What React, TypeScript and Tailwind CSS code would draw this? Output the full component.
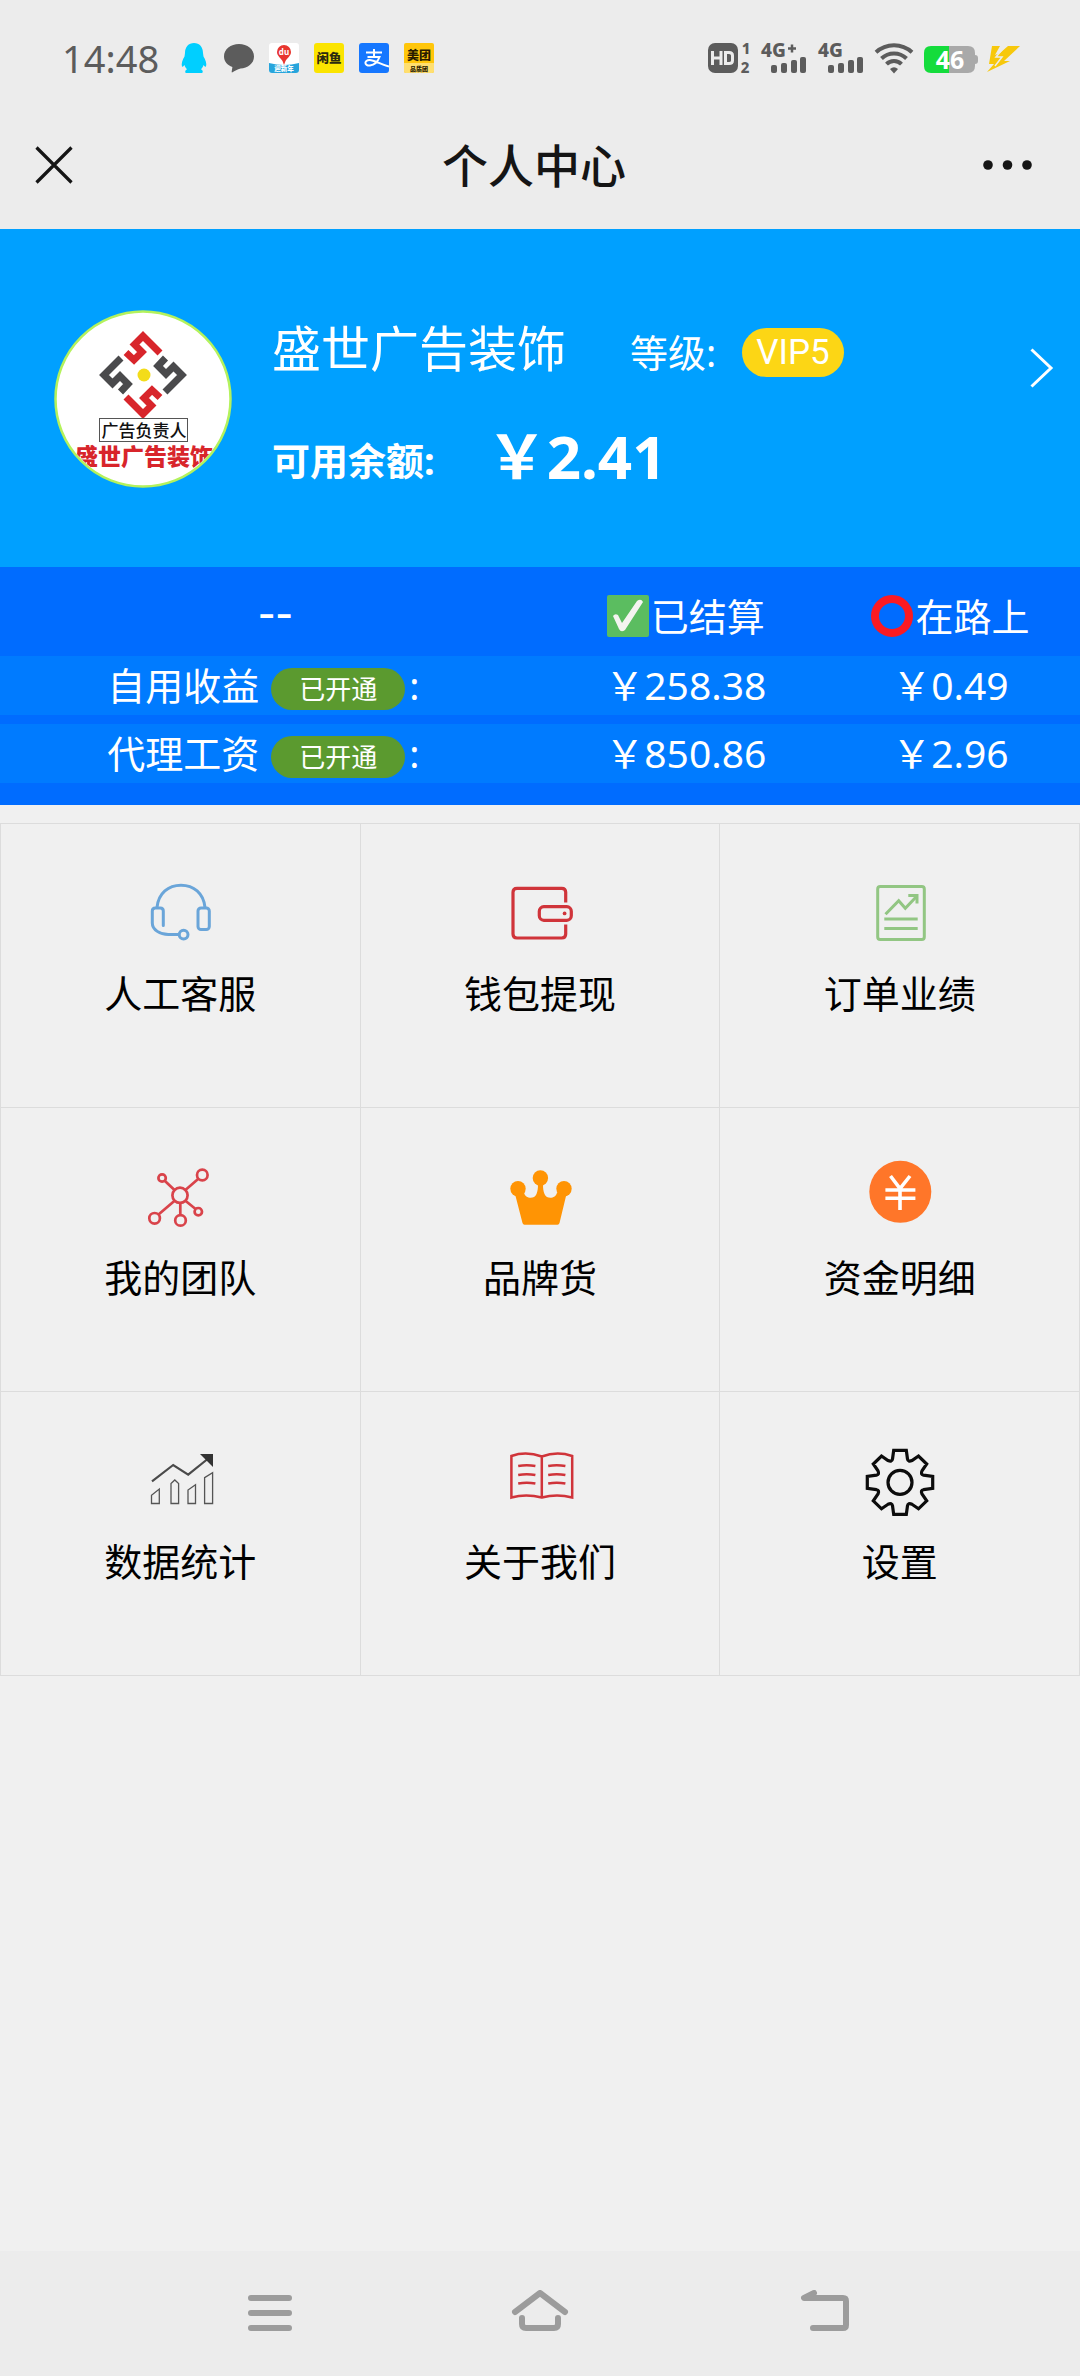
import React from "react"

const StatusBar = () => (
	<div className="flex h-[100px] items-center justify-between pt-4 pr-[60px] pl-[62px] text-[#5c5c5c]">
		<div className="flex items-center">
			<time className="w-[117px] text-[38px] leading-none">14:48</time>
			<div className="flex items-center gap-[15px]">
				<svg className="size-[30px]" viewBox="0 0 30 30" fill="#00cfff">
					<path d="M15 0c5.500 0 9 4 9 10l.5 3.500c2 3.500 3.500 7 2.500 10-.6.8-1.700-.5-2.500-1.500-.4 1.800-1.200 3-2.500 4.200 2 .8 2.500 3.800.5 3.800h-15c-2 0-1.500-3 .5-3.800-1.300-1.200-2.100-2.400-2.500-4.200-.8 1-1.900 2.300-2.500 1.500-1-3 .5-6.500 2.500-10L6 10c0-6 3.500-10 9-10z" />
				</svg>
				<svg className="size-[30px]" viewBox="0 0 30 30" fill="#5c5c5c">
					<path d="M15 1c8.300 0 15 5.200 15 12.500S23.500 25 16.500 25.500c-3 1-6 2.500-8 3.800-.6.3-1-.1-.8-.8l.7-4.500C3.400 22.300 0 18.400 0 13.500 0 6.200 6.700 1 15 1z" />
				</svg>
				<svg className="size-[30px] overflow-visible" viewBox="0 0 30 30">
					<rect width="30" height="30" rx="3" fill="#fff" />
					<path d="M0 20q15 4 30 0v7a3 3 0 0 1-3 3H3a3 3 0 0 1-3-3z" fill="#27a5dc" />
					<path d="M15 2a7 7 0 0 1 7 7c0 4-4 6-5.500 9l-1.500 4-1.500-4C12 15 8 13 8 9a7 7 0 0 1 7-7z" fill="#e8352e" />
					<text x="15" y="12" textAnchor="middle" fontSize="8" fontWeight="700" fill="#fff">
						du
					</text>
					<text x="15" y="28" textAnchor="middle" fontSize="6.500" fontWeight="900" fill="#fff">
						迎新年
					</text>
				</svg>
				<svg className="size-[30px]" viewBox="0 0 30 30">
					<rect width="30" height="30" rx="3" fill="#fbe400" />
					<text x="15" y="20" textAnchor="middle" fontSize="12.500" fontWeight="900" fill="#2b2a10">
						闲鱼
					</text>
				</svg>
				<svg className="size-[30px]" viewBox="0 0 30 30">
					<rect width="30" height="30" rx="3" fill="#1677ff" />
					<path
						d="M7 9.500h16M15 6v8M8.500 14h12c-1.500 4-5 8-9.500 8.500-6 .5-6-5.500-.5-5.500 5 0 10 4 19.500 6.500"
						fill="none"
						stroke="#fff"
						strokeWidth="2"
					/>
				</svg>
				<svg className="size-[30px] overflow-visible" viewBox="0 0 30 30">
					<rect width="30" height="30" rx="2" fill="#ffc60a" />
					<path d="M0 20h30v8a2 2 0 0 1-2 2H2a2 2 0 0 1-2-2z" fill="#ffdf70" />
					<text x="15" y="17" textAnchor="middle" fontSize="12" fontWeight="900" fill="#2a1c00">
						美团
					</text>
					<text x="15" y="28" textAnchor="middle" fontSize="6" fontWeight="900" fill="#2a1c00">
						品质团
					</text>
				</svg>
			</div>
		</div>
		<svg className="h-[30px] w-[312px] overflow-visible" viewBox="0 0 312 30" fill="#5c5c5c" fontWeight="800">
			<rect width="30" height="30" rx="7" />
			<path d="M4.500 8v14M13 8v14M4.500 15H13M17.500 9.500v11h3.500q3.500 0 3.500-3v-5q0-3-3.500-3z" fill="none" stroke="#ececec" strokeWidth="3" />
			<text x="38" y="11" textAnchor="middle" fontSize="15">
				1
			</text>
			<text x="37" y="30" textAnchor="middle" fontSize="15">
				2
			</text>
			<text x="53" y="14" fontSize="19">
				4G
			</text>
			<path d="M84 1.500v8M80 5.500h8" stroke="#5c5c5c" strokeWidth="2.500" />
			<SignalBars x={63} />
			<text x="110" y="14" fontSize="19">
				4G
			</text>
			<SignalBars x={120} />
			<g fill="none" stroke="#5c5c5c" strokeWidth="4">
				<path d="M168 9.200a26.500 26.500 0 0 1 36 0" />
				<path d="M173.500 15.500a18 18 0 0 1 25 0" />
				<path d="M178.500 21.200a10.500 10.500 0 0 1 15 0" />
			</g>
			<path d="M182 26q4-3.600 8 0l-4 4.500z" />
			<path d="M223 3h13v27h-13q-7 0-7-7V10q0-7 7-7z" fill="#14dc3c" />
			<path d="M240 3h20q7 0 7 7v2q3 0 3 3v3q0 3-3 3v2q0 7-7 7h-20z" fill="#a9a9a9" />
			<path d="M235 3h6v27h-6z" fill="#14dc3c" />
			<text x="242" y="25.500" textAnchor="middle" fontSize="25" fontWeight="700" fill="#fff">
				46
			</text>
			<path d="M284 3h8l-5 9 5-2 8-7h12l-16 15h6l-23 11 7-8h-5z" fill="#f7c80c" />
			<path d="M297 3l-9 11h6l-7 9" fill="none" stroke="#ececec" strokeWidth="1.500" />
		</svg>
	</div>
)

const SignalBars = ({ x }: { x: number }) => (
	<>
		<rect x={x} y="22" width="6" height="8" rx="2" />
		<rect x={x + 10} y="20" width="6" height="10" rx="2" />
		<rect x={x + 20} y="17" width="6" height="13" rx="2" />
		<rect x={x + 29} y="14" width="6" height="16" rx="2" />
	</>
)

const TitleBar = () => (
	<header className="flex h-[129px] items-center justify-between px-[34px] text-[#151515]">
		<button type="button" aria-label="关闭">
			<svg className="size-10" viewBox="0 0 40 40" fill="none" stroke="currentColor" strokeWidth="3.200">
				<path d="M2.500 2.500l35 35M37.500 2.500l-35 35" />
			</svg>
		</button>
		<h1 className="pl-3 text-[46px] leading-none font-medium">个人中心</h1>
		<button type="button" aria-label="更多" className="pr-3">
			<svg className="h-10 w-[52px]" viewBox="0 0 52 40" fill="currentColor">
				<circle cx="6" cy="20" r="4.800" />
				<circle cx="25.500" cy="20" r="4.800" />
				<circle cx="45" cy="20" r="4.800" />
			</svg>
		</button>
	</header>
)

const LOGO_PIECE = "M93 44L76 27 67.500 35.500 75 43 67 51 59 43.500"

const Avatar = () => (
	<svg className="size-[178px] shrink-0" viewBox="0 0 178 178">
		<defs>
			<clipPath id="avatar-clip">
				<circle cx="89" cy="89" r="86" />
			</clipPath>
		</defs>
		<circle cx="89" cy="89" r="87.500" fill="#fff" stroke="#b4f25c" strokeWidth="2.500" />
		<g fill="none" strokeWidth="7" transform="translate(13 -1)">
			<path d={LOGO_PIECE} stroke="#d8252b" />
			<path d={LOGO_PIECE} stroke="#4a4a4c" transform="rotate(90 76 66)" />
			<path d={LOGO_PIECE} stroke="#d8252b" transform="rotate(180 76 66)" />
			<path d={LOGO_PIECE} stroke="#4a4a4c" transform="rotate(270 76 66)" />
		</g>
		<circle cx="90" cy="65" r="6.500" fill="#f3dc1a" />
		<rect x="45.500" y="108.500" width="88" height="23" fill="#fff" stroke="#555" />
		<text x="90" y="126.500" textAnchor="middle" fontSize="17" fontWeight="500" fill="#111">
			广告负责人
		</text>
		<g clipPath="url(#avatar-clip)">
			<text x="90" y="155" textAnchor="middle" fontSize="23" fontWeight="900" fill="#d8252b">
				盛世广告装饰
			</text>
		</g>
	</svg>
)

const ProfileCard = () => (
	<section className="flex h-[338px] items-start bg-[#00a0ff] pt-[81px] pr-[26px] pl-[54px] text-white">
		<Avatar />
		<div className="ml-10 flex grow flex-col gap-10 pt-2">
			<div className="flex h-[60px] items-center">
				<span className="text-[49px] leading-none">盛世广告装饰</span>
				<div className="mt-2 ml-16 flex items-center">
					<span className="text-[38px] leading-none">等级:</span>
					<span className="ml-[26px] flex h-[49px] items-center rounded-full bg-[#fcd615] px-[14px] font-[Roboto] text-[35px] leading-none">
						VIP5
					</span>
				</div>
			</div>
			<div className="flex h-20 items-center font-bold">
				<span className="mt-1 text-[38px] leading-none">可用余额:</span>
				<span className="mb-1 ml-[52px] text-[60px] leading-none">￥2.41</span>
			</div>
		</div>
		<button type="button" aria-label="个人资料" className="mt-[38px]">
			<svg className="h-10 w-6" viewBox="0 0 24 40" fill="none" stroke="currentColor" strokeWidth="3">
				<path d="M1.500 1.500L21 20 1.500 38.500" />
			</svg>
		</button>
	</section>
)

const earnings = [
	{ name: "自用收益", settled: "￥258.38", pending: "￥0.49" },
	{ name: "代理工资", settled: "￥850.86", pending: "￥2.96" },
]

const EarningsTable = () => (
	<section className="bg-[#006cff] pb-[22px] text-[38px] leading-none text-white">
		<table className="w-full table-fixed border-separate border-spacing-0 text-center">
			<thead>
				<tr className="h-[89px]">
					<th className="w-[51%] p-0 font-['DejaVu_Sans'] text-[48px] font-normal">--</th>
					<th className="w-[25%] pt-2 font-normal">
						<span className="flex items-center justify-center gap-[2px]">
							<svg className="size-[42px]" viewBox="0 0 42 42">
								<rect width="42" height="42" rx="2" fill="#5bbd60" />
								<path d="M6 21q2-3 5-1l4 8L30 6q4-3 6 1L18 35q-4 3-6-1z" fill="#f4f4f0" />
							</svg>
							已结算
						</span>
					</th>
					<th className="w-[24%] pt-2 font-normal">
						<span className="flex items-center justify-center gap-[2px]">
							<svg className="size-[42px]" viewBox="0 0 42 42" fill="none">
								<circle cx="21" cy="21" r="17" stroke="#fb1a22" strokeWidth="8" />
							</svg>
							在路上
						</span>
					</th>
				</tr>
			</thead>
			<tbody>
				{earnings.map((row) => (
					<tr
						key={row.name}
						className="h-[59px] not-first:h-[68px] *:border-[#006cff] *:bg-[#007bff] *:p-0 *:pb-[2px] not-first:*:border-t-[9px]">
						<td>
							<span className="flex items-center justify-center pr-6">
								{row.name}
								<span className="mt-2 mr-1 ml-3 flex h-[42px] items-center rounded-full bg-[#5b9a2f] px-7 text-[26px]">
									已开通
								</span>
								:
							</span>
						</td>
						<td className="text-[39px]">{row.settled}</td>
						<td className="text-[39px]">{row.pending}</td>
					</tr>
				))}
			</tbody>
		</table>
	</section>
)

const HeadsetIcon = () => (
	<g stroke="#6aa5d9" strokeWidth="3" strokeLinecap="round" strokeLinejoin="round">
		<path d="M13 30.500C14.500 16 24.500 8.300 37 8.300S59.500 16 61 30.500" />
		<path d="M19.300 48.500V34q0-3-3-3h-5q-3 0-3 3v12c0 7 8 11.500 16 11.500h10.500" />
		<circle cx="39.600" cy="57.600" r="4.400" />
		<rect x="54" y="31" width="11.300" height="21.500" rx="3" />
	</g>
)

const WalletIcon = () => (
	<g stroke="#d0343a" strokeWidth="3.200">
		<path d="M61.700 25.500V15.300q0-4-4-4H13q-4 0-4 4V57q0 4 4 4h44.700q4 0 4-4v-9.500" />
		<rect x="35.300" y="29.700" width="32" height="13.600" rx="4.500" />
		<circle cx="60.600" cy="36.400" r="1.900" fill="#d0343a" stroke="none" />
	</g>
)

const ReportIcon = () => (
	<g stroke="#92c683" strokeWidth="3">
		<rect x="13.700" y="9.400" width="46.600" height="53" rx="2.500" />
		<path d="M21.500 37.300l13.200-13.600 6.600 7.600L53 19" />
		<path d="M44.300 18.500H53v8M20.300 42h33.400M20.300 51.400h33.400" />
	</g>
)

const TeamIcon = () => (
	<g stroke="#d9434a" strokeWidth="2.700">
		<circle cx="36" cy="34.300" r="7.600" />
		<circle cx="18.100" cy="17" r="3.700" />
		<circle cx="58.300" cy="14" r="5.300" />
		<circle cx="54.300" cy="50.700" r="3.700" />
		<circle cx="36.500" cy="59.400" r="5.300" />
		<circle cx="10.600" cy="57.300" r="5.300" />
		<path d="M20.700 19.700l9.800 9.200M54.400 17.700L41.400 28.900M41.400 39.700l10.200 8.300M36.300 42v12M30.600 39.700L14.500 53.600" />
	</g>
)

const CrownIcon = () => (
	<g fill="#ff9404">
		<circle cx="36.400" cy="17" r="7.700" />
		<circle cx="14" cy="27.700" r="7.700" />
		<circle cx="60" cy="27.700" r="7.700" />
		<path d="M11 33l9-1.500c1 6 10 7.500 12.500 1.500 1.200-3 1.500-6 1.500-9h5c0 3 .3 6 1.500 9 2.500 6 11.500 4.500 12.500-1.500l9.500 1.500-7 29q-.5 1.700-2 1.700h-33q-1.500 0-2-1.700z" />
	</g>
)

const FundsIcon = () => (
	<>
		<circle cx="36.300" cy="30.800" r="31" fill="#ff7629" />
		<path d="M26.500 15l9.500 12.500L46 15M36 27v22M21.400 29h30M21.400 37.200h30" stroke="#fff" strokeWidth="3.600" />
	</>
)

const StatsIcon = () => (
	<>
		<path d="M8 36.300L29.200 20l15 9.700L63 14.500" stroke="#4a4a4a" strokeWidth="2.200" />
		<path d="M56 9h13v13z" fill="#333" />
		<path
			d="M7.500 58.500v-8.200l7.800-6.300v14.500zM27 58.500V38.500l3.800-3.500 3.800 3.500v20zM44 58.500V45l7.500-5.300v18.800zM60.600 58.500V32.700l8-5v30.800z"
			stroke="#555"
			strokeWidth="1.300"
		/>
	</>
)

const BookIcon = () => (
	<g stroke="#d0343a" strokeWidth="2.500">
		<path d="M37.800 11.500Q22 6 7.400 11v41.500Q22 48.500 37.800 52.500 53 48.500 68.200 52.500V11Q53 6 37.800 11.500v41" />
		<path d="M14.200 21q8.600-1.600 17.200 0M14.200 30q8.600-1.600 17.200 0M14.200 38.500q8.600-1.600 17.200 0M44.200 21q8.600-1.600 17.200 0M44.200 30q8.600-1.600 17.200 0M44.200 38.500q8.600-1.600 17.200 0" />
	</g>
)

const GearIcon = () => (
	<g stroke="#0c0c0c" strokeWidth="3.200">
		<circle cx="36" cy="37.400" r="12" />
		<path d="M29.700 5.400h12.600l1.200 8.600q.5 3.200 4.500 1.500l6.500-4.500 8.200 8-4.700 6.800q-1.700 3.700 1.500 4.300l9.200 1.300v12l-9.200 1.300q-3.200.6-1.500 4.300l4.700 6.800-8.200 8-6.500-4.500q-4-1.700-4.500 1.500l-1.200 8.600H29.700l-1.200-8.600q-.5-3.200-4.500-1.500l-6.500 4.500-8.200-8L14 49q1.700-3.700-1.500-4.300l-9.200-1.300v-12l9.200-1.300q3.200-.6 1.500-4.300L9.300 19l8.200-8 6.500 4.500q4 1.700 4.500-1.500z" />
	</g>
)

const menuItems = [
	{ label: "人工客服", Icon: HeadsetIcon },
	{ label: "钱包提现", Icon: WalletIcon },
	{ label: "订单业绩", Icon: ReportIcon },
	{ label: "我的团队", Icon: TeamIcon },
	{ label: "品牌货", Icon: CrownIcon },
	{ label: "资金明细", Icon: FundsIcon },
	{ label: "数据统计", Icon: StatsIcon },
	{ label: "关于我们", Icon: BookIcon },
	{ label: "设置", Icon: GearIcon },
]

const MenuGrid = () => (
	<nav className="mt-[18px] grid grid-cols-3 border-t border-l border-[#dcdcdc]">
		{menuItems.map(({ label, Icon }) => (
			<a
				key={label}
				href="#"
				className="flex h-[284px] flex-col items-center gap-6 border-r border-b border-[#dcdcdc] pt-[53px] text-[38px] leading-10 text-black">
				<svg className="size-[72px] overflow-visible" viewBox="0 0 72 72" fill="none">
					<Icon />
				</svg>
				{label}
			</a>
		))}
	</nav>
)

const SystemNav = () => (
	<footer className="grid h-[125px] grid-cols-3 items-center bg-[#ececec] px-[12.5%] pb-1 text-[#9c9c9c]">
		<button type="button" aria-label="最近任务" className="flex justify-center">
			<svg className="h-11 w-20" viewBox="0 0 80 44" fill="none" stroke="currentColor" strokeWidth="6" strokeLinecap="round">
				<path d="M21 8h38M21 23h38M21 38h38" />
			</svg>
		</button>
		<button type="button" aria-label="主屏幕" className="flex justify-center">
			<svg
				className="h-11 w-20"
				viewBox="0 0 80 44"
				fill="none"
				stroke="currentColor"
				strokeWidth="6"
				strokeLinecap="round"
				strokeLinejoin="round">
				<path d="M15 22L40 3l25 19" />
				<path d="M22 28v6q0 4 4 4h28q4 0 4-4v-6" />
			</svg>
		</button>
		<button type="button" aria-label="返回" className="flex justify-center">
			<svg
				className="h-11 w-20"
				viewBox="0 0 80 44"
				fill="none"
				stroke="currentColor"
				strokeWidth="6"
				strokeLinecap="round"
				strokeLinejoin="round">
				<path d="M44 3l-10 5h39q3 0 3 3v24q0 3-3 3H43" />
			</svg>
		</button>
	</footer>
)

const App: React.FC = () => {
	return (
		<div className="flex min-h-screen flex-col bg-[#f0f0f0] font-['Noto_Sans','Noto_Sans_CJK_SC',sans-serif]">
			<div className="bg-[#ececec]">
				<StatusBar />
				<TitleBar />
			</div>
			<main className="grow">
				<ProfileCard />
				<EarningsTable />
				<MenuGrid />
			</main>
			<SystemNav />
		</div>
	)
}

export default App
